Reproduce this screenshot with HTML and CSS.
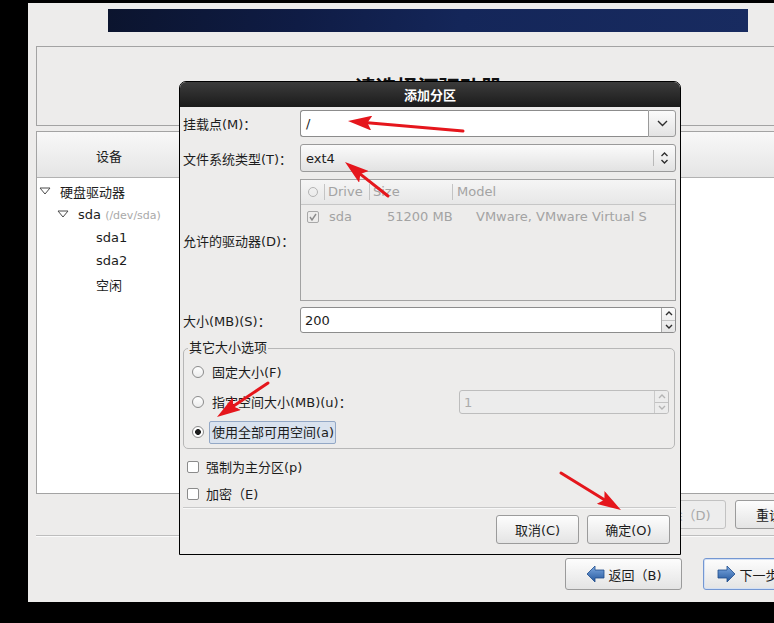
FILE: index.html
```html
<!DOCTYPE html>
<html>
<head>
    <meta charset="UTF-8">
    <title>添加分区</title>
    <link rel="stylesheet" href="styles.css">
</head>
<body>
    <div class="screen">
        <div class="banner"></div>

        <div class="title-panel">
            <h1>请选择源驱动器</h1>
        </div>

        <div class="device-panel">
            <div class="device-head">
                <div class="col-device">设备</div>
            </div>
            <div class="device-tree">
                <div class="tree-row lvl0">
                    <svg class="expander" width="12" height="8" viewBox="0 0 12 8"><polygon points="1,1 11,1 6,7" /></svg>
                    <span class="tree-text">硬盘驱动器</span>
                </div>
                <div class="tree-row lvl1">
                    <svg class="expander" width="12" height="8" viewBox="0 0 12 8"><polygon points="1,1 11,1 6,7" /></svg>
                    <span class="tree-text">sda <span class="dev-path">(/dev/sda)</span></span>
                </div>
                <div class="tree-row lvl2"><span class="no-expander"></span><span class="tree-text">sda1</span></div>
                <div class="tree-row lvl2"><span class="no-expander"></span><span class="tree-text">sda2</span></div>
                <div class="tree-row lvl2"><span class="no-expander"></span><span class="tree-text">空闲</span></div>
            </div>
        </div>

        <div class="action-row">
            <button class="btn">创建(C)</button>
            <button class="btn" disabled>编辑(E)</button>
            <button class="btn" disabled>删除（D)</button>
            <button class="btn">重设(s)</button>
        </div>

        <div class="screen-sep"></div>

        <div class="nav-row">
            <button class="btn nav-btn">
                <svg width="19" height="18" viewBox="0 0 19 18">
                    <defs>
                        <linearGradient id="blueL" x1="0" y1="0" x2="0" y2="1">
                            <stop offset="0" stop-color="#7eaae2" />
                            <stop offset="1" stop-color="#23569c" />
                        </linearGradient>
                    </defs>
                    <path d="M1,9 L9,1 L9,5 L18,5 L18,13 L9,13 L9,17 Z" fill="url(#blueL)" stroke="#1f4c8c" stroke-width="0.8" />
                </svg>
                <span>返回（B)</span>
            </button>
            <button class="btn nav-btn focused">
                <svg width="19" height="18" viewBox="0 0 19 18">
                    <path d="M18,9 L10,1 L10,5 L1,5 L1,13 L10,13 L10,17 Z" fill="url(#blueL)" stroke="#1f4c8c" stroke-width="0.8" />
                </svg>
                <span>下一步（N)</span>
            </button>
        </div>

        <!-- 添加分区 对话框 -->
        <div class="dialog">
            <div class="dialog-title">添加分区</div>
            <div class="dialog-body">

                <div class="field f-mount">
                    <label>挂载点(M)：</label>
                    <div class="combo-entry">
                        <span class="entry">/</span>
                        <span class="combo-btn">
                            <svg width="11" height="7" viewBox="0 0 11 7"><polyline points="1,1 5.5,5.5 10,1" /></svg>
                        </span>
                    </div>
                </div>

                <div class="field f-fs">
                    <label>文件系统类型(T)：</label>
                    <div class="combo">
                        <span class="combo-text">ext4</span>
                        <span class="combo-sep"></span>
                        <svg class="updown" width="9" height="14" viewBox="0 0 9 14"><polyline points="1.5,5 4.5,2 7.5,5" /><polyline points="1.5,9 4.5,12 7.5,9" /></svg>
                    </div>
                </div>

                <div class="field f-drives">
                    <label>允许的驱动器(D)：</label>
                    <div class="drive-list">
                        <div class="dl-head">
                            <span class="dl-cell c-chk"><span class="dl-circle"></span></span>
                            <span class="dl-cell c-drive">Drive</span>
                            <span class="dl-cell c-size">Size</span>
                            <span class="dl-cell c-model">Model</span>
                        </div>
                        <div class="dl-row">
                            <span class="dl-cell c-chk">
                                <span class="dl-check">
                                    <svg width="10" height="10" viewBox="0 0 10 10"><polyline points="2,5 4,8 8,2" /></svg>
                                </span>
                            </span>
                            <span class="dl-cell c-drive">sda</span>
                            <span class="dl-cell c-size">51200 MB</span>
                            <span class="dl-cell c-model">VMware, VMware Virtual S</span>
                        </div>
                    </div>
                </div>

                <div class="field f-size">
                    <label>大小(MB)(S)：</label>
                    <div class="spin">
                        <span class="spin-val">200</span>
                        <span class="spin-btns">
                            <span><svg width="8" height="5" viewBox="0 0 8 5"><polyline points="1,4 4,1 7,4" /></svg></span>
                            <span><svg width="8" height="5" viewBox="0 0 8 5"><polyline points="1,1 4,4 7,1" /></svg></span>
                        </span>
                    </div>
                </div>

                <fieldset class="size-opts">
                    <legend>其它大小选项</legend>
                    <div class="radio-row">
                        <span class="radio"></span>
                        <span class="radio-label">固定大小(F)</span>
                    </div>
                    <div class="radio-row">
                        <span class="radio"></span>
                        <span class="radio-label">指定空间大小(MB)(u)：</span>
                        <div class="spin spin-off">
                            <span class="spin-val">1</span>
                            <span class="spin-btns">
                                <span><svg width="8" height="5" viewBox="0 0 8 5"><polyline points="1,4 4,1 7,4" /></svg></span>
                                <span><svg width="8" height="5" viewBox="0 0 8 5"><polyline points="1,1 4,4 7,1" /></svg></span>
                            </span>
                        </div>
                    </div>
                    <div class="radio-row">
                        <span class="radio on"></span>
                        <span class="radio-label focus">使用全部可用空间(a)</span>
                    </div>
                </fieldset>

                <div class="check-row"><span class="check"></span>强制为主分区(p)</div>
                <div class="check-row"><span class="check"></span>加密（E)</div>

                <div class="dialog-sep"></div>

                <div class="dialog-buttons">
                    <button class="btn">取消(C)</button>
                    <button class="btn">确定(O)</button>
                </div>
            </div>
        </div>
    </div>

    <!-- 标注箭头 -->
    <svg class="arrows" width="774" height="623" viewBox="0 0 774 623">
        <defs>
            <marker id="head" markerUnits="userSpaceOnUse" viewBox="0 0 24 15" markerWidth="24" markerHeight="15" refX="4.5" refY="7.5" orient="auto">
                <path d="M0,0 L24,7.5 L0,15 L4.5,7.5 Z" fill="#e5161c" />
            </marker>
        </defs>
        <line x1="463" y1="131" x2="367.4" y2="122.7" marker-end="url(#head)" />
        <line x1="388" y1="196" x2="360.3" y2="174.1" marker-end="url(#head)" />
        <line x1="268" y1="383" x2="233.2" y2="406.2" marker-end="url(#head)" />
        <line x1="561" y1="473" x2="604.4" y2="499.8" marker-end="url(#head)" />
    </svg>
</body>
</html>
```

FILE: styles.css
```css
* {
    box-sizing: border-box;
}

html, body {
    margin: 0;
    padding: 0;
    height: 100%;
    overflow: hidden;
    background-color: #000;
}

body {
    font-family: "DejaVu Sans", "Noto Sans CJK SC", sans-serif;
    font-size: 13px;
    color: #1c1c1c;
}

/* 安装程序背景 */
.screen {
    position: relative;
    width: 800px;
    height: 599px;
    margin: 3px 0 0 28px;
    background-color: #edeceb;
    overflow: hidden;
}

.banner {
    width: 640px;
    height: 23px;
    margin: 6px auto 0;
    background: linear-gradient(100deg, #0b142e 0%, #0f1c45 30%, #142659 55%, #182b60 100%);
}

.title-panel {
    height: 80px;
    margin: 14px 8px 0;
    border: 1px solid #a3a3a3;
    display: flex;
    align-items: center;
    justify-content: center;
}

.title-panel h1 {
    margin: 0;
    font-size: 21px;
    font-weight: bold;
    color: #111;
}

.device-panel {
    height: 363px;
    margin: 5px 8px 0;
    border: 1px solid #a3a3a3;
    display: flex;
    flex-direction: column;
}

.device-head {
    height: 46px;
    padding-top: 2px;
    border-bottom: 1px solid #b2b2b2;
    background: linear-gradient(#f8f8f8, #e5e5e5);
    display: flex;
}

.col-device {
    width: 144px;
    display: flex;
    align-items: center;
    justify-content: center;
}

.device-tree {
    flex: 1;
    background-color: #fff;
    padding-top: 1.5px;
}

.tree-row {
    height: 23.25px;
    display: flex;
    align-items: center;
}

.tree-row.lvl0 { padding-left: 2px; }
.tree-row.lvl1 { padding-left: 20px; }
.tree-row.lvl2 { padding-left: 38px; }

.expander,
.no-expander {
    width: 12px;
    margin-right: 9px;
    flex: none;
}

.expander polygon {
    fill: #fff;
    stroke: #4a4a4a;
    stroke-width: 1;
}

.tree-text {
    white-space: nowrap;
}

.dev-path {
    font-size: 11px;
    color: #a9a9a9;
}

/* 按钮 */
.btn {
    font: inherit;
    color: #1c1c1c;
    height: 29px;
    width: 85px;
    padding: 0;
    border: 1px solid #9b9b9b;
    border-radius: 3px;
    background: linear-gradient(#fdfdfd, #e4e4e4);
    display: flex;
    align-items: center;
    justify-content: center;
    white-space: nowrap;
}

.btn:disabled {
    color: #a8a8a8;
    border-color: #c2c2c2;
    background: #ededed;
}

.action-row {
    display: flex;
    justify-content: flex-end;
    gap: 9px;
    margin: 6px 8px 0;
}

.screen-sep {
    height: 2px;
    margin: 6px 8px 0;
    border-top: 1px solid #bdbdbd;
    border-bottom: 1px solid #fafafa;
}

.nav-row {
    display: flex;
    justify-content: flex-end;
    gap: 21px;
    margin: 21px 8px 0;
}

.nav-btn {
    width: 117px;
    height: 32px;
    gap: 4px;
}

.nav-btn.focused {
    border-color: #7497d2;
    box-shadow: inset 0 0 0 1px #d3e0f4;
}

/* 对话框 */
.dialog {
    position: absolute;
    left: 151px;
    top: 78px;
    width: 502px;
    height: 474px;
    border: 1px solid #000;
    border-radius: 7px 7px 0 0;
    background-color: #edeceb;
    overflow: hidden;
}

.dialog-title {
    height: 25px;
    background: linear-gradient(#3b3b3b, #1b1b1b);
    color: #fff;
    font-weight: bold;
    display: flex;
    align-items: center;
    justify-content: center;
}

.dialog-body {
    padding: 0 4px 0 3px;
}

.field {
    display: flex;
    align-items: center;
}

.field label {
    width: 117px;
    flex: none;
}

.f-mount { height: 27px; margin-top: 3px; }
.f-fs { height: 28px; margin-top: 7px; }
.f-drives { height: 122px; margin-top: 7px; }
.f-size { height: 26px; margin-top: 6px; }

.combo-entry {
    flex: 1;
    height: 100%;
    display: flex;
}

.entry {
    flex: 1;
    background-color: #fff;
    border: 1px solid #8c8c8c;
    border-right: none;
    border-radius: 3px 0 0 3px;
    padding-left: 5px;
    display: flex;
    align-items: center;
}

.combo-btn {
    width: 28px;
    border: 1px solid #9a9a9a;
    border-radius: 0 3px 3px 0;
    background: linear-gradient(#fbfbfb, #e3e3e3);
    display: flex;
    align-items: center;
    justify-content: center;
}

.combo-btn polyline,
.updown polyline,
.spin-btns polyline {
    fill: none;
    stroke: #2e2e2e;
    stroke-width: 1.4;
}

.combo {
    flex: 1;
    height: 100%;
    border: 1px solid #9a9a9a;
    border-radius: 3px;
    background: linear-gradient(#fbfbfb, #e2e2e2);
    display: flex;
    align-items: center;
    padding: 0 6px 0 5px;
}

.combo-text {
    flex: 1;
}

.combo-sep {
    width: 1px;
    height: 16px;
    background-color: #b9b9b9;
    margin-right: 6px;
}

/* 驱动器列表 */
.drive-list {
    flex: 1;
    height: 100%;
    border: 1px solid #a2a2a2;
    color: #a3a3a3;
    overflow: hidden;
    white-space: nowrap;
}

.dl-head,
.dl-row {
    display: grid;
    grid-template-columns: 23px 45px 83px 1fr;
}

.dl-head {
    height: 25px;
    border-bottom: 1px solid #c6c6c6;
    background: linear-gradient(#f5f5f5, #e7e7e7);
    align-items: center;
}

.dl-head .dl-cell + .dl-cell {
    border-left: 1px solid #c4c4c4;
    line-height: 16px;
}

.dl-head .c-drive,
.dl-head .c-size { padding-left: 3px; }
.dl-head .c-model { padding-left: 4px; }

.dl-cell.c-chk {
    display: flex;
    justify-content: center;
}

.dl-circle {
    width: 10px;
    height: 10px;
    border: 1px solid #b3b3b3;
    border-radius: 50%;
}

.dl-row {
    height: 23px;
    align-items: center;
}

.dl-row .c-chk {
    justify-content: flex-start;
    padding-left: 6px;
}

.dl-row .c-drive { padding-left: 5px; }
.dl-row .c-size { padding-left: 18px; }
.dl-row .c-model { padding-left: 24px; }

.dl-check {
    width: 12px;
    height: 12px;
    border: 1px solid #a8a8a8;
    border-radius: 2px;
    display: flex;
    align-items: center;
    justify-content: center;
}

.dl-check polyline {
    fill: none;
    stroke: #8c8c8c;
    stroke-width: 1.4;
}

/* 数值框 */
.spin {
    flex: 1;
    height: 100%;
    display: flex;
    border: 1px solid #8c8c8c;
    border-radius: 3px;
    background-color: #fff;
    overflow: hidden;
}

.spin-val {
    flex: 1;
    padding-left: 4px;
    display: flex;
    align-items: center;
}

.spin-btns {
    width: 14px;
    display: flex;
    flex-direction: column;
    border-left: 1px solid #a8a8a8;
    background: linear-gradient(#fbfbfb, #e5e5e5);
}

.spin-btns span {
    flex: 1;
    display: flex;
    align-items: center;
    justify-content: center;
}

.spin-btns span + span {
    border-top: 1px solid #c2c2c2;
}

.spin-off {
    flex: none;
    width: 210px;
    height: 24px;
    margin-left: auto;
    border-color: #bdbdbd;
    background-color: #ececec;
    color: #ababab;
}

.spin-off .spin-btns {
    border-left-color: #cacaca;
    background: #ececec;
}

.spin-off .spin-btns polyline {
    stroke: #b4b4b4;
}

/* 其它大小选项 */
.size-opts {
    margin: 7px 1px 0 0;
    padding: 1px 5px 1px 4px;
    border: 1px solid #b7b7b7;
    border-radius: 5px;
}

.size-opts legend {
    padding: 0 1px;
    line-height: 16px;
}

.radio-row {
    height: 30px;
    display: flex;
    align-items: center;
    padding-left: 4px;
}

.radio {
    width: 12px;
    height: 12px;
    flex: none;
    border: 1px solid #8b8b8b;
    border-radius: 50%;
    background: linear-gradient(#ffffff, #ececec);
    margin-right: 5px;
}

.radio.on {
    background: radial-gradient(circle, #1e1e1e 0 2.6px, #ffffff 3.2px);
}

.radio-label {
    padding: 2px 1px 2px 2px;
    line-height: 17px;
    border: 1px solid transparent;
    border-radius: 2px;
}

.radio-label.focus {
    background-color: #d9e2ee;
    border-color: #93a8c6;
}

.check-row {
    height: 27px;
    display: flex;
    align-items: center;
    padding-left: 4px;
}

.size-opts + .check-row {
    margin-top: 4px;
}

.check {
    width: 12px;
    height: 12px;
    border: 1px solid #8b8b8b;
    border-radius: 2px;
    background-color: #fff;
    margin-right: 7px;
}

.dialog-sep {
    height: 2px;
    border-top: 1px solid #c9c9c9;
    border-bottom: 1px solid #f8f8f8;
}

.dialog-buttons {
    display: flex;
    justify-content: flex-end;
    gap: 8px;
    margin: 6px 6px 0 0;
}

.dialog-buttons .btn {
    width: 83px;
}

/* 红色标注箭头 */
.arrows {
    position: absolute;
    left: 0;
    top: 0;
    pointer-events: none;
}

.arrows line {
    stroke: #e5161c;
    stroke-width: 3;
    stroke-linecap: round;
}
```
